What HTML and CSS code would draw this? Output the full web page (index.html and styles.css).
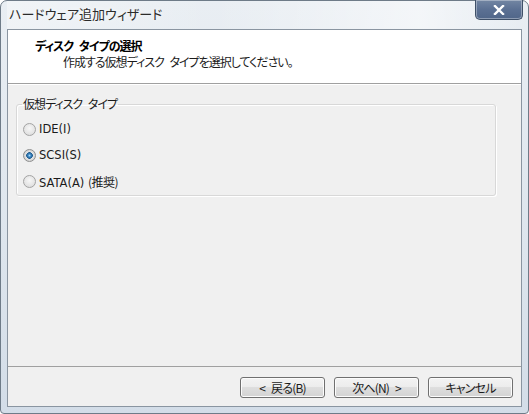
FILE: index.html
```html
<!DOCTYPE html>
<html lang="ja">
<head>
    <meta charset="UTF-8">
    <meta name="viewport" content="width=device-width, initial-scale=1.0">
    <title>ハードウェア追加ウィザード</title>
    <link rel="stylesheet" href="styles.css">
</head>
<body>
    <div class="window">
        <div class="titlebar">
            <span class="title">ハードウェア追加ウィザード</span>
            <button class="close" type="button" aria-label="閉じる">
                <svg width="12" height="10" viewBox="0 0 12 10">
                    <path d="M2 1 L10 9 M10 1 L2 9" stroke="#fff" stroke-width="2.4" stroke-linecap="square"/>
                </svg>
            </button>
        </div>

        <div class="client">
            <div class="header">
                <div class="header-title">ディスク タイプの選択</div>
                <div class="header-desc">作成する仮想ディスク タイプを選択してください。</div>
            </div>

            <div class="content">
                <fieldset class="group">
                    <legend>仮想ディスク タイプ</legend>
                    <label class="option"><input type="radio" name="disk_type" value="ide"><span>IDE(I)</span></label>
                    <label class="option"><input type="radio" name="disk_type" value="scsi" checked><span>SCSI(S)</span></label>
                    <label class="option"><input type="radio" name="disk_type" value="sata"><span>SATA(A) <span class="jp">(推奨)</span></span></label>
                </fieldset>
            </div>

            <div class="footer">
                <button class="btn" type="button">&lt; 戻る(B)</button>
                <button class="btn" type="button">次へ(N) &gt;</button>
                <button class="btn" type="button">キャンセル</button>
            </div>
        </div>
    </div>
</body>
</html>
```

FILE: styles.css
```css
html, body {
    margin: 0;
    padding: 0;
}
body {
    width: 529px;
    height: 414px;
    overflow: hidden;
    background-color: #ffffff;
    font-family: "Noto Sans CJK JP", "Noto Sans", sans-serif;
    font-feature-settings: "palt";
    font-size: 12px;
    color: #1b1b1b;
}
.window {
    width: 529px;
    height: 414px;
    box-sizing: border-box;
    border: 1px solid #6e7b88;
    border-radius: 7px 7px 4px 4px;
    background: linear-gradient(to bottom, #e9eef3 0%, #dde5ed 60%, #d3dde8 100%);
    padding: 0 6px 6px 6px;
    display: flex;
    flex-direction: column;
}
.titlebar {
    height: 28px;
    display: flex;
    align-items: flex-start;
    background: linear-gradient(to right, rgba(255,255,255,0.35) 0%, rgba(255,255,255,0) 40%, rgba(255,255,255,0.5) 80%, rgba(255,255,255,0) 100%);
}
.title {
    margin: 4px 0 0 2px;
    font-size: 13px;
    line-height: 18px;
    color: #2b2b2b;
    text-shadow: 0 0 6px #ffffff;
}
.close {
    margin: -1px -1px 0 auto;
    width: 48px;
    height: 20px;
    padding: 0;
    border: 1px solid #3f5068;
    border-top: none;
    border-radius: 0 0 5px 5px;
    background: linear-gradient(to bottom, #7386a3 0%, #5b7093 50%, #506689 100%);
    box-shadow: inset 0 0 0 1px rgba(255,255,255,0.35);
    display: flex;
    align-items: center;
    justify-content: center;
}
.client {
    flex: 1;
    display: flex;
    flex-direction: column;
    border: 1px solid #8a95a1;
    background-color: #f0f0f0;
}
.header {
    height: 53px;
    box-sizing: content-box;
    background-color: #ffffff;
    border-bottom: 1px solid #a0a0a0;
    box-shadow: 0 1px 0 #ffffff;
    padding: 0 0 0 27px;
    letter-spacing: -1px;
    word-spacing: 4px;
}
.header-title {
    margin-top: 8px;
    font-weight: bold;
    line-height: 15px;
    color: #000000;
}
.header-desc {
    margin: 1px 0 0 28px;
    line-height: 15px;
}
.content {
    flex: 1;
    padding: 12px 25px 0 8px;
}
.group {
    margin: 0;
    padding: 4px 0 1px 5px;
    border: 1px solid #d8d8d8;
    border-radius: 3px;
    box-shadow: inset 1px 1px 0 #ffffff, 1px 1px 0 #ffffff;
}
.group legend {
    padding: 0 1px;
    line-height: 16px;
    letter-spacing: -1px;
    word-spacing: 4px;
}
.option {
    height: 26px;
    padding-left: 1px;
    display: flex;
    align-items: center;
    font-family: "DejaVu Sans", "Noto Sans CJK JP", sans-serif;
    font-size: 11.5px;
}
.option .jp {
    font-family: "Noto Sans CJK JP", sans-serif;
    font-size: 12px;
    letter-spacing: -0.5px;
}
.option input {
    -webkit-appearance: none;
    appearance: none;
    margin: 0 3px 0 0;
    width: 13px;
    height: 13px;
    border: 1px solid #a3a3a3;
    border-radius: 50%;
    background: radial-gradient(circle at 50% 40%, #f7f7f7 0%, #d8d8d8 100%);
}
.option input:checked {
    border-color: #8e8f8f;
    background: radial-gradient(circle at 50% 50%, #a9dcfb 0, #3d88c4 1.5px, #1f5b8e 3px, #e4e4e4 3.6px, #cfcfcf 6px);
}
.footer {
    border-top: 1px solid #a0a0a0;
    padding: 10px 8px 8px 0;
    display: flex;
    justify-content: flex-end;
    gap: 9px;
}
.btn {
    width: 85px;
    height: 21px;
    padding: 0;
    border: 1px solid #707070;
    border-radius: 3px;
    background: linear-gradient(to bottom, #f3f3f3 0%, #ececec 50%, #dedede 50%, #d3d3d3 100%);
    box-shadow: inset 0 0 0 1px #fcfcfc;
    font-family: inherit;
    font-feature-settings: "palt";
    font-size: 12px;
    letter-spacing: -0.8px;
    word-spacing: 4px;
    color: #1b1b1b;
}
```
